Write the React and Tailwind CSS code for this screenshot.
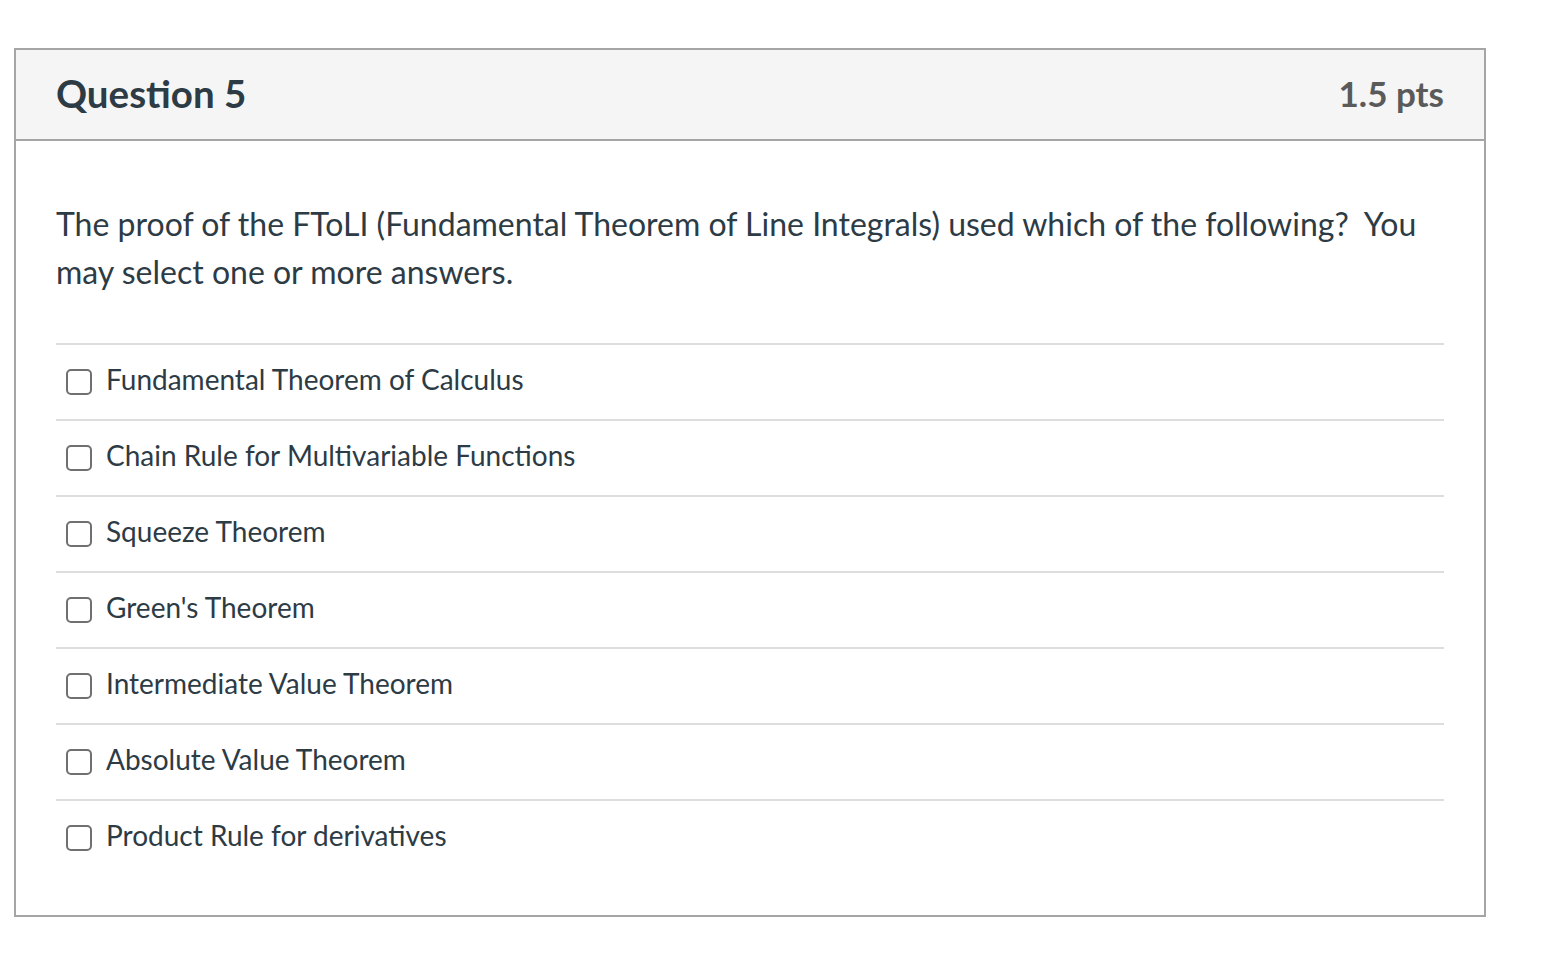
import React from "react";

const answers = [
  "Fundamental Theorem of Calculus",
  "Chain Rule for Multivariable Functions",
  "Squeeze Theorem",
  "Green's Theorem",
  "Intermediate Value Theorem",
  "Absolute Value Theorem",
  "Product Rule for derivatives",
];

export default function App() {
  return (
    <div
      className="min-h-[960px] w-[1556px] bg-white pt-[48px] pl-[14px]"
      style={{ fontFamily: "Lato, 'Noto Sans', sans-serif" }}
    >
      <div className="w-[1472px] h-[869px] border-2 border-[#a5a5a5] flex flex-col">
        <div className="h-[91px] bg-[#f5f5f5] border-b-2 border-[#a5a5a5] flex items-center justify-between pl-[40px] pr-[40px] pb-[3px]">
          <h2 className="text-[38.5px] font-bold text-[#2d3b45] leading-none">Question 5</h2>
          <div className="text-[35px] font-bold text-[#5a5a5a] leading-none">1.5 pts</div>
        </div>
        <div className="px-[40px] pt-[59px]">
          <p className="text-[32px] leading-[48px] text-[#2d3b45]">
            The proof of the FToLI (Fundamental Theorem of Line Integrals) used which of the following?&nbsp; You may select one or more answers.
          </p>
          <div className="mt-[47px]">
            {answers.map((a) => (
              <div
                key={a}
                className="h-[76px] border-t-2 border-[#dddddd] flex items-center pl-[10px]"
              >
                <span className="w-[26px] h-[26px] border-2 border-[#707070] rounded-[5px] shrink-0" />
                <span className="ml-[14px] mb-[7px] text-[28px] text-[#2d3b45] leading-none">{a}</span>
              </div>
            ))}
          </div>
        </div>
      </div>
    </div>
  );
}
